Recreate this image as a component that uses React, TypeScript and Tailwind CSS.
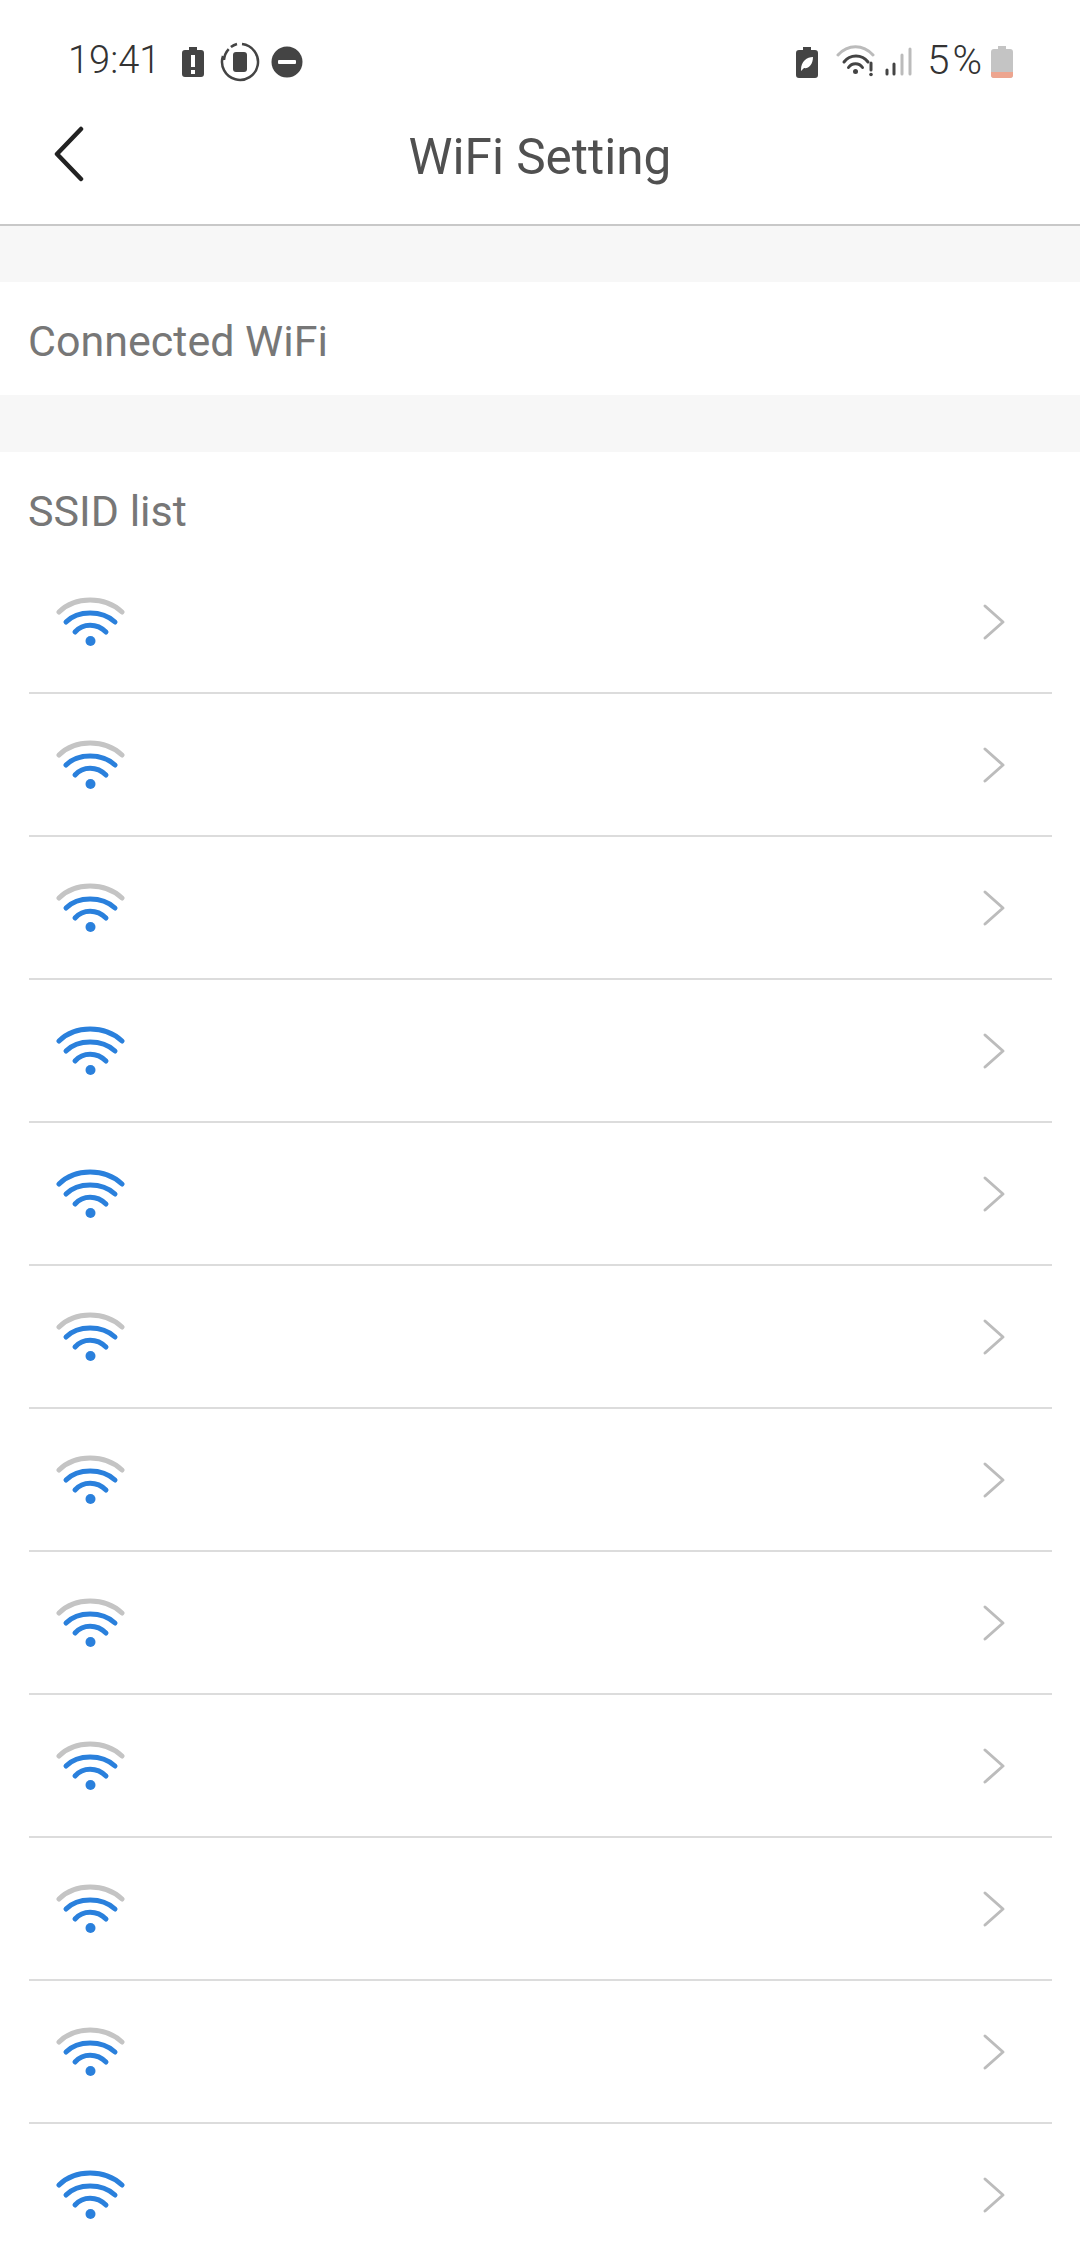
const ROWS = [false, false, false, true, true, false, false, false, false, false, false, true]

function WifiIcon({ full }: { full: boolean }) {
  return (
    <svg width="70" height="52" viewBox="0 0 70 52" fill="none" strokeWidth="5" strokeLinecap="round">
      <path d="M4 16C20 0 50 0 67 16" stroke={full ? '#2a80dc' : '#c4c4c4'} />
      <path d="M11 26C23 14 47 14 60 26" stroke="#2a80dc" />
      <path d="M20 36C28 27 42 27 51 36" stroke="#2a80dc" />
      <circle cx="35.5" cy="45" r="5" fill="#2a80dc" />
    </svg>
  )
}

function StatusBar() {
  return (
    <div className="h-[88px] pt-[44px] pl-[68px] pr-[67px] flex items-start justify-between">
      <div className="flex items-center h-[35px]">
        <span className="text-[38px] leading-[35px] text-[#333] font-light w-[92px] -mt-[3px]">19:41</span>
        <svg className="ml-[21px]" width="24" height="34" viewBox="0 0 24 34">
          <path d="M8 2h8v3h4a3 3 0 0 1 3 3v21a3 3 0 0 1-3 3H4a3 3 0 0 1-3-3V8a3 3 0 0 1 3-3h4z" fill="#444" />
          <rect x="10" y="10" width="4" height="12" fill="#fff" />
          <rect x="10" y="25" width="4" height="4" fill="#fff" />
        </svg>
        <svg className="ml-[15px]" width="40" height="40" viewBox="0 0 40 40" fill="none">
          <path d="M22 2A18 18 0 1 1 3 14" stroke="#444" strokeWidth="2.5" />
          <path d="M4 18A18 18 0 0 1 17 2" stroke="#444" strokeWidth="2.5" strokeDasharray="12 3" />
          <rect x="13" y="10" width="14" height="20" rx="3" fill="#444" />
        </svg>
        <svg className="ml-[11px]" width="32" height="32" viewBox="0 0 32 32">
          <circle cx="16" cy="16" r="15.5" fill="#444" />
          <rect x="7" y="14" width="18" height="4" rx="1" fill="#fff" />
        </svg>
      </div>
      <div className="flex items-center h-[35px]">
        <svg width="22" height="32" viewBox="0 0 22 32">
          <path d="M7 1h8v3h4a3 3 0 0 1 3 3v22a3 3 0 0 1-3 3H3a3 3 0 0 1-3-3V7a3 3 0 0 1 3-3h4z" fill="#444" />
          <path d="M5 24C5 15 11 11 17 11C17 19 12 23 8 22L5 25z" fill="#fff" />
        </svg>
        <svg className="ml-[18px]" width="78" height="34" viewBox="0 0 78 34" fill="none" strokeLinecap="round">
          <path d="M2 10C12 -1 27 -1 37 10" stroke="#bbb" strokeWidth="3" />
          <path d="M8 17C14 9 26 9 32 17" stroke="#444" strokeWidth="3" />
          <path d="M12.5 22.5C16 17.5 23 17.5 26.5 22.5" stroke="#444" strokeWidth="3" />
          <circle cx="19.5" cy="26.5" r="2.5" fill="#444" />
          <path d="M35 18V25" stroke="#444" strokeWidth="3" />
          <circle cx="35" cy="29.5" r="1.8" fill="#444" />
          <path d="M51 25V29" stroke="#444" strokeWidth="3" />
          <path d="M58 19V29" stroke="#444" strokeWidth="3" />
          <path d="M66 10V29" stroke="#bbb" strokeWidth="3" />
          <path d="M74 4V29" stroke="#bbb" strokeWidth="3" />
        </svg>
        <span className="ml-[13px] text-[40px] leading-[35px] tracking-[3px] text-[#333] font-light -mt-[3px]">5%</span>
        <svg className="ml-[6px]" width="22" height="32" viewBox="0 0 22 32">
          <path d="M7 0h8v3h4a3 3 0 0 1 3 3v23a3 3 0 0 1-3 3H3a3 3 0 0 1-3-3V6a3 3 0 0 1 3-3h4z" fill="#c4c4c4" />
          <path d="M0 26h22v3a3 3 0 0 1-3 3H3a3 3 0 0 1-3-3z" fill="#eda58f" />
        </svg>
      </div>
    </div>
  )
}

export default function App() {
  return (
    <div className="w-[1080px] h-[2260px] overflow-hidden bg-white font-['Roboto',sans-serif]">
      <StatusBar />
      <div className="relative h-[138px] pt-[3px] flex items-center justify-center border-b-2 border-[#c8c8c8]">
        <svg className="absolute left-[53px] top-[38px]" width="34" height="56" viewBox="0 0 34 56" fill="none">
          <path d="M28 3L4 28L28 53" stroke="#222" strokeWidth="4.5" strokeLinecap="round" strokeLinejoin="round" />
        </svg>
        <h1 className="text-[49.5px] leading-none text-[#505050] font-normal">WiFi Setting</h1>
      </div>
      <div className="h-[56px] bg-[#f7f7f7]" />
      <div className="h-[113px] pl-[28px] pt-[6px] flex items-center text-[43px] text-[#777]">Connected WiFi</div>
      <div className="h-[57px] bg-[#f7f7f7]" />
      <div className="h-[99px] pl-[28px] pt-[34px] text-[43px] leading-[50px] text-[#777]">SSID list</div>
      {ROWS.map((full, i) => (
        <div key={i} className="ml-[29px] mr-[28px] h-[143px] flex items-center justify-between border-b-2 border-[#dcdcdc] pl-[26px] pr-[46px]">
          <WifiIcon full={full} />
          <svg width="24" height="38" viewBox="0 0 24 38" fill="none">
            <path d="M3 3L21 19L3 35" stroke="#bcbcbc" strokeWidth="3" strokeLinecap="round" strokeLinejoin="round" />
          </svg>
        </div>
      ))}
    </div>
  )
}
